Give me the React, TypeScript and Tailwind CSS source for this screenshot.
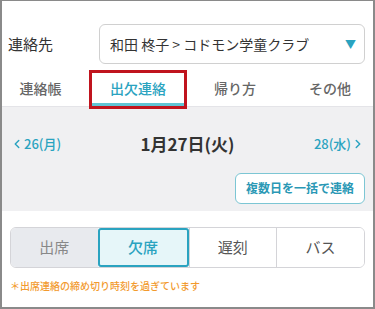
import { ChevronLeft, ChevronRight } from 'lucide-react';

const tabs = ['連絡帳', '出欠連絡', '帰り方', 'その他'];
const statuses = ['出席', '欠席', '遅刻', 'バス'];

export default function App() {
  const activeTab = 1;
  const activeStatus = 1;

  return (
    <div
      className="w-[375px] h-[309px] overflow-hidden border-2 border-t border-[#8a8a8a] bg-white flex flex-col"
      style={{ fontFamily: '"Noto Sans CJK JP", "Noto Sans", sans-serif' }}
    >
      {/* 連絡先 */}
      <div className="flex items-center pt-[23px] pl-[6px] pr-[8px]">
        <div className="w-[91px] text-[15px] text-[#333]">連絡先</div>
        <div className="flex-1 h-[40px] rounded-md border border-[#d0d0d0] flex items-center justify-between pl-[10px] pr-[8px]">
          <span className="text-[14px] text-[#333]">和田 柊子 &gt; コドモン学童クラブ</span>
          <span className="text-[11px] text-[#2aa3c0]">▼</span>
        </div>
      </div>

      {/* タブ */}
      <div className="relative grid grid-cols-[87px_98px_96px_1fr] mt-[6px] h-[37px] border-b border-[#e4e4e8]">
        {tabs.map((tab, i) => (
          <div
            key={tab}
            className={`relative flex items-center justify-center ${i === 0 ? 'pr-[10px]' : ''} ${i === 3 ? 'pl-[4px]' : ''}`}
          >
            <span
              className={`text-[14px] font-medium ${i === activeTab ? 'text-[#2aa3c0]' : 'text-[#666]'}`}
            >
              {tab}
            </span>
            {i === activeTab && (
              <>
                <div className="absolute left-[2px] right-[2px] bottom-0 h-[3px] bg-[#5fc4d4]" />
                <div className="absolute left-0 right-0 top-0 -bottom-[3px] border-[3px] border-[#c0141e]" />
              </>
            )}
          </div>
        ))}
      </div>

      {/* 日付 */}
      <div className="bg-[#f0f0f2] h-[104px] px-[8px] flex flex-col">
        <div className="flex items-center justify-between mt-[24px]">
          <div className="flex items-center text-[13px] font-medium text-[#2aa3c0] w-[70px]">
            <ChevronLeft className="w-[14px] h-[14px]" strokeWidth={2.5} />
            <span>26(月)</span>
          </div>
          <div className="text-[17px] font-bold text-[#333]">1月27日(火)</div>
          <div className="flex items-center justify-end text-[13px] font-medium text-[#2aa3c0] w-[70px]">
            <span>28(水)</span>
            <ChevronRight className="w-[14px] h-[14px]" strokeWidth={2.5} />
          </div>
        </div>
        <div className="flex justify-end mt-[16px]">
          <button className="h-[31px] w-[130px] rounded-md border-[1.5px] border-[#7cc6d4] bg-white text-[12px] font-bold text-[#2a98b5]">
            複数日を一括で連絡
          </button>
        </div>
      </div>

      {/* 出欠 */}
      <div className="px-[8px] pt-[16px]">
        <div className="flex h-[41px] rounded-md border border-[#d4d4d8] overflow-hidden">
          {statuses.map((s, i) => (
            <div
              key={s}
              className={`flex-1 flex items-center justify-center text-[15px] ${
                i === activeStatus
                  ? 'bg-[#e6f6f9] border-2 border-[#2aa3c0] text-[#2aa3c0] font-medium rounded-[3px]'
                  : i === 0
                  ? 'bg-[#e8eaee] text-[#888]'
                  : 'bg-white text-[#555] border-l border-[#d4d4d8]'
              }`}
            >
              {s}
            </div>
          ))}
        </div>
        <p className="mt-[10px] text-[10px] font-medium text-[#f29a2e]">＊出席連絡の締め切り時刻を過ぎています</p>
      </div>
    </div>
  );
}
